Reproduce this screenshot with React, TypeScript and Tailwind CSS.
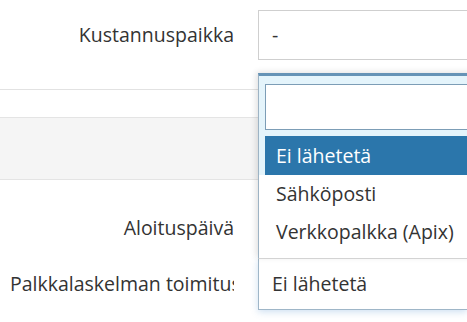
import React from "react";

const font = { fontFamily: '"Open Sans", "Noto Sans", sans-serif' };

function Label({ children }: { children: React.ReactNode }) {
  return (
    <div className="w-[258px] shrink-0 pl-[10px] pr-[24px] flex items-center justify-end overflow-hidden whitespace-nowrap text-[#333]">
      <span className="block overflow-hidden">{children}</span>
    </div>
  );
}

export default function App() {
  return (
    <div
      className="relative w-[467px] h-[322px] overflow-hidden bg-white text-[19.5px] leading-none text-[#333]"
      style={font}
    >
      {/* Row: Kustannuspaikka */}
      <div className="flex h-[89px] pt-[10px]">
        <div className="w-[258px] shrink-0 pr-[24px] flex h-[50px] items-center justify-end whitespace-nowrap">
          Kustannuspaikka
        </div>
        <div className="flex-1 h-[50px] border border-[#cfcfcf] border-r-0 flex items-center pl-[13px]">
          -
        </div>
      </div>
      <div className="h-px bg-[#e2e2e2]" />
      <div className="h-[27px]" />
      <div className="h-[63px] bg-[#f5f5f5] border-y border-[#e4e4e4]" />

      {/* Row: Aloituspäivä */}
      <div className="flex h-[78px] pt-[18px]">
        <div className="w-[258px] shrink-0 pr-[24px] flex items-center justify-end whitespace-nowrap">
          Aloituspäivä
        </div>
        <div className="flex-1" />
      </div>

      {/* Row: Palkkalaskelman toimitus */}
      <div className="flex h-[52px]">
        <div className="w-[258px] shrink-0 pl-[10px] pr-[24px] flex items-center whitespace-nowrap">
          <div className="w-full overflow-hidden">Palkkalaskelman toimitus</div>
        </div>
        <div className="flex-1 h-[52px] border border-[#9fb6c8] border-t-[#dcdcdc] border-r-0 flex items-center pl-[13px] shadow-[0_2px_7px_rgba(90,150,210,0.3)]">
          Ei lähetetä
        </div>
      </div>

      {/* Dropdown overlay */}
      <div className="absolute left-[258px] top-[73px] w-[230px] h-[185px] bg-white border-l border-[#9db3c4] border-t-[3px] border-t-[#6593b6] shadow-[-2px_-1px_6px_rgba(0,0,0,0.12)]">
        <div className="bg-[#e4f4fb] pt-[8px] pl-[6px] pb-[6px]">
          <div className="h-[46px] bg-white border border-[#7c9db6] border-r-0" />
        </div>
        <div className="bg-[#e4f4fb] pl-[6px]">
          <div className="h-[39px] bg-[#2b76ab] text-white flex items-center pl-[11px]">
            Ei lähetetä
          </div>
        </div>
        <div className="pl-[6px]">
          <div className="h-[38px] flex items-center pl-[11px]">Sähköposti</div>
          <div className="h-[38px] flex items-center pl-[11px] whitespace-nowrap">
            Verkkopalkka (Apix)
          </div>
        </div>
      </div>
    </div>
  );
}
